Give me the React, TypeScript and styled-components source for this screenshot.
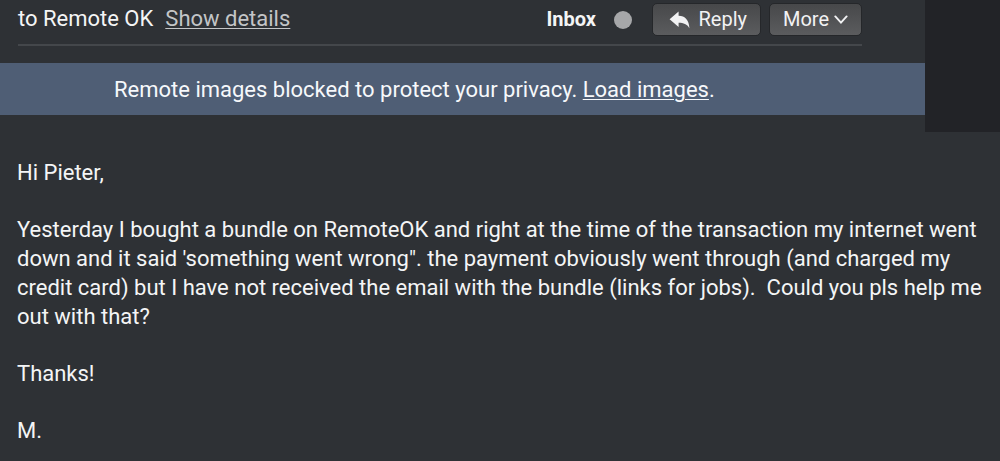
import React from "react";
import styled, { createGlobalStyle } from "styled-components";

const GlobalStyle = createGlobalStyle`
  *, *::before, *::after { box-sizing: border-box; }
  body {
    margin: 0;
    background: #2e3135;
    color: #f4f5f6;
    font-family: Roboto, "Liberation Sans", sans-serif;
    font-size: 22px;
    line-height: 29px;
  }
`;

const Page = styled.main`
  min-height: 100vh;
`;

const Top = styled.div`
  display: grid;
  grid-template-columns: minmax(0, 1fr) 75px;
`;

const TopContent = styled.div`
  padding-bottom: 17px;
`;

const SidePanel = styled.aside`
  background: #222327;
`;

const Header = styled.header`
  display: flex;
  align-items: flex-start;
  justify-content: space-between;
  height: 46px;
  margin: 0 63px 17px 18px;
  padding-top: 3px;
  border-bottom: 2px solid #44474b;
`;

const Recipient = styled.div`
  display: flex;
  gap: 12px;
  line-height: 32px;
`;

const TextLink = styled.a<{ $muted?: boolean }>`
  color: ${(p) => (p.$muted ? "#c3c5c7" : "inherit")};
  text-decoration: underline;
  text-decoration-thickness: 1px;
  text-underline-offset: 2px;
`;

const Actions = styled.div`
  display: flex;
  align-items: center;
`;

const Folder = styled.span`
  font-size: 20px;
  font-weight: 700;
`;

const Status = styled.span`
  width: 18px;
  height: 18px;
  margin: 0 20px 0 18px;
  border-radius: 50%;
  background: #a6a7a9;
`;

const Button = styled.button<{ $width: number; $gap: number }>`
  display: flex;
  align-items: center;
  justify-content: flex-end;
  gap: ${(p) => p.$gap}px;
  width: ${(p) => p.$width}px;
  height: 33px;
  padding: 0 13px;
  border: 1px solid #25272a;
  border-radius: 5px;
  background: linear-gradient(#47484a, #5b5c5e);
  color: #f2f2f3;
  font: inherit;
  font-size: 20px;

  & + & {
    margin-left: 8px;
  }
`;

const Notice = styled.div`
  padding: 12px 16px 11px 114px;
  background: #4f5e75;
  color: #f6f8fb;
`;

const Message = styled.article`
  display: flex;
  flex-direction: column;
  gap: 28px;
  padding: 26px 16px 16px 17px;
`;

const Paragraph = styled.p`
  margin: 0;
`;

export default function App() {
  return (
    <Page>
      <GlobalStyle />
      <Top>
        <TopContent>
          <Header>
            <Recipient>
              <span>to Remote OK</span>
              <TextLink $muted href="#details">Show details</TextLink>
            </Recipient>
            <Actions>
              <Folder>Inbox</Folder>
              <Status />
              <Button type="button" $width={109} $gap={9}>
                <svg width="21" height="18" viewBox="0 0 21 18" aria-hidden="true">
                  <path
                    d="M9.6 .4v4.4C16.200 5 20 9 20.400 17.200 18 13 14.600 11.700 9.600 11.700V16L.6 8.200z"
                    fill="currentColor"
                  />
                </svg>
                Reply
              </Button>
              <Button type="button" $width={93} $gap={5}>
                More
                <svg width="16" height="11" viewBox="0 0 16 11" aria-hidden="true">
                  <path
                    d="M1.500 2l6.500 7 6.500-7"
                    fill="none"
                    stroke="currentColor"
                    strokeWidth="2.200"
                    strokeLinecap="round"
                  />
                </svg>
              </Button>
            </Actions>
          </Header>
          <Notice>
            Remote images blocked to protect your privacy. <TextLink href="#load">Load images</TextLink>.
          </Notice>
        </TopContent>
        <SidePanel />
      </Top>
      <Message>
        <Paragraph>Hi Pieter,</Paragraph>
        <Paragraph>
          Yesterday I bought a bundle on RemoteOK and right at the time of the transaction my internet went
          <br />
          down and it said 'something went wrong". the payment obviously went through (and charged my
          <br />
          credit card) but I have not received the email with the bundle (links for jobs).{"\u00a0 "}Could you pls help me
          <br />
          out with that?
        </Paragraph>
        <Paragraph>Thanks!</Paragraph>
        <Paragraph>M.</Paragraph>
      </Message>
    </Page>
  );
}
